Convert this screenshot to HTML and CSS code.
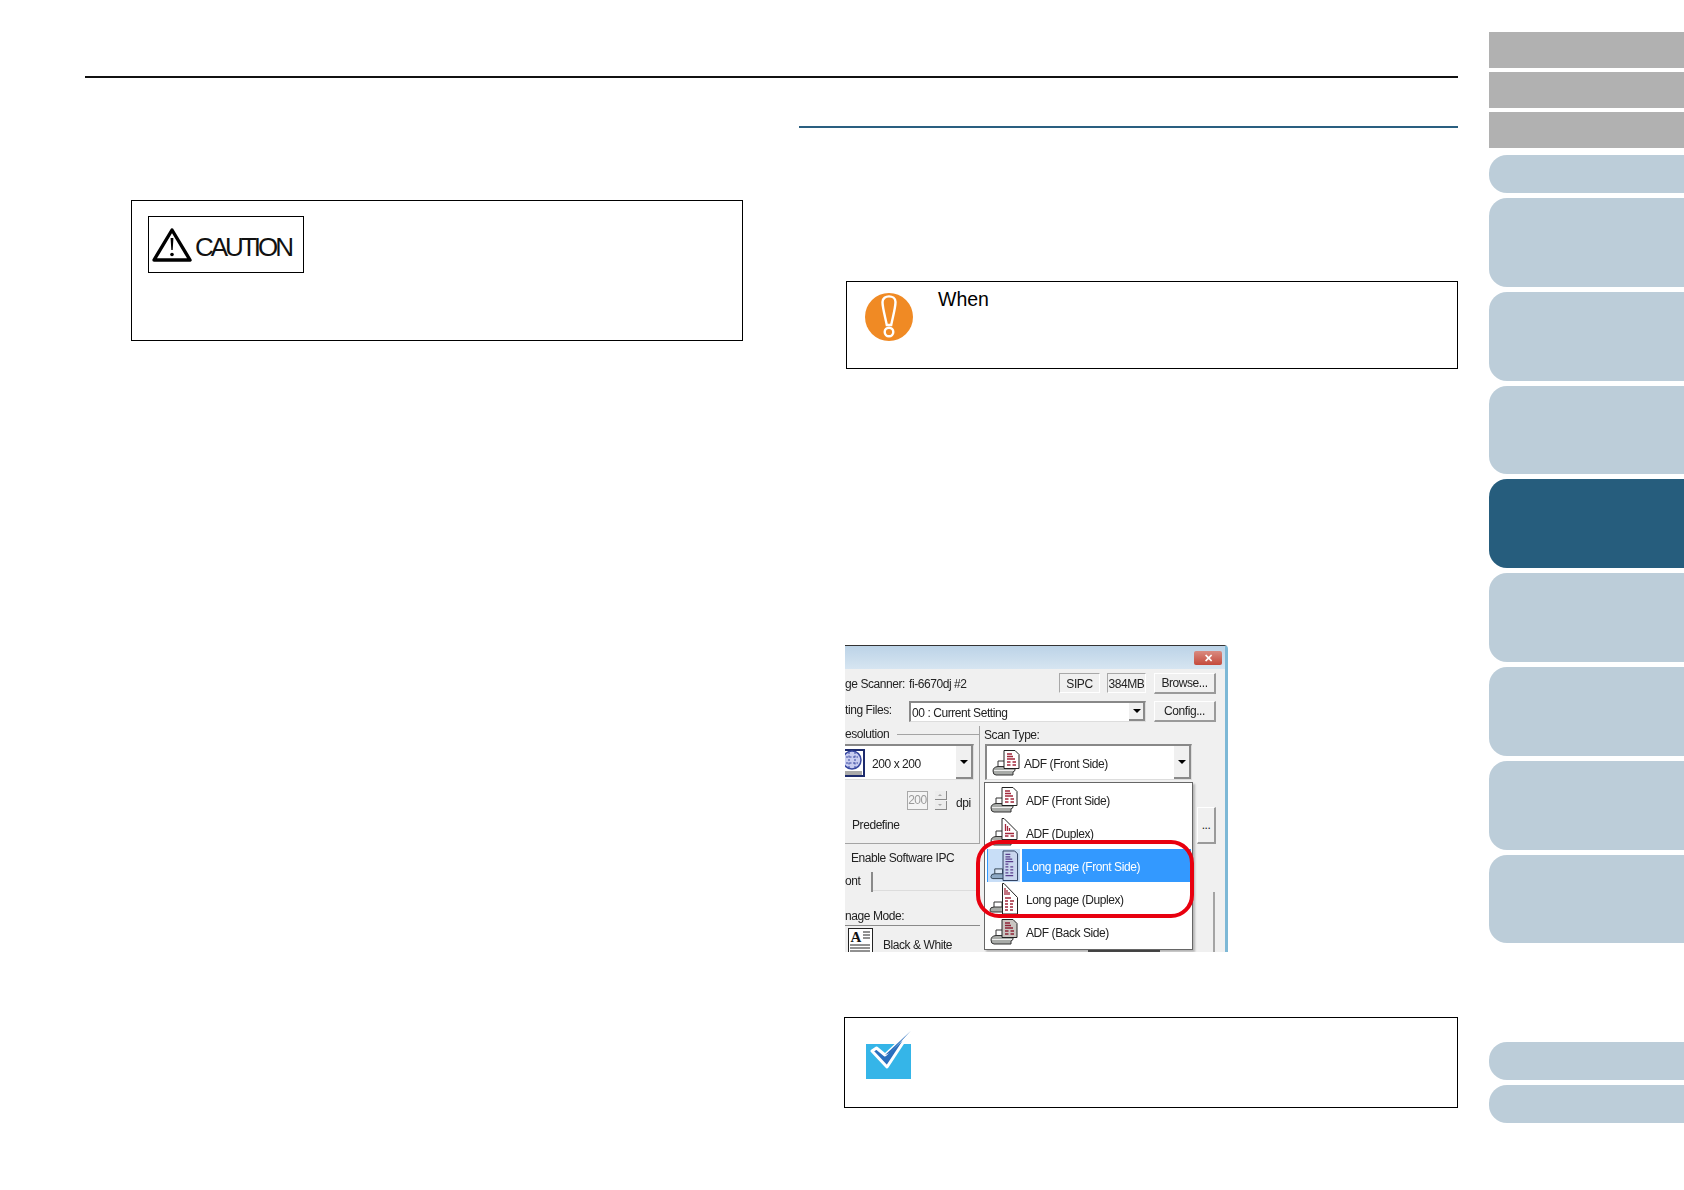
FILE: index.html
```html
<!DOCTYPE html>
<html lang="en">
<head>
<meta charset="utf-8">
<title>Scan Type</title>
<link rel="stylesheet" href="styles.css">
</head>
<body>
<svg class="sprites" aria-hidden="true">
  <symbol id="base" viewBox="0 0 33 33">
    <path d="M9 21v-6h8v6z" fill="#fff" stroke="#333"/>
    <path d="M4 25q0-4 5-4.500h17v4l-2 1.500v3H7q-3 0-3-4z" fill="#a9aca9" stroke="#333"/>
    <path d="M5 24.500h20" stroke="#eee"/>
  </symbol>
  <symbol id="adf" viewBox="0 0 33 33">
    <use href="#base"/>
    <path d="M15 4.500h11l4 4v14H15z" fill="#fff" stroke="#222"/>
    <path d="M18 8h5M18 10.500h6M18 13h8M18 16h3.500M23.500 16h3.500M18 19h3.500M23.500 19h3.500" stroke="#a3283c" stroke-width="1.300"/>
  </symbol>
  <symbol id="adf-back" viewBox="0 0 33 33">
    <use href="#base"/>
    <path d="M15 4.500h11l4 4v14H15z" fill="#c9c5c1" stroke="#222"/>
    <path d="M18 8h5M18 10.500h6M18 13h8M18 16h3.500M23.500 16h3.500M18 19h3.500M23.500 19h3.500" stroke="#8e2336" stroke-width="1.300"/>
  </symbol>
  <symbol id="adf-duplex" viewBox="0 0 33 33">
    <use href="#base"/>
    <path d="M17 2.500l13 13v8H15v-21z" fill="#fff" stroke="#222"/>
    <path d="M18.500 8v7M20.500 10v5M22.500 12v3" stroke="#a3283c" stroke-width="1.300"/>
    <path d="M18 17.500h9M18 20h3.500M23.500 20h3.500" stroke="#a3283c" stroke-width="1.300"/>
  </symbol>
  <symbol id="long" viewBox="0 0 33 33">
    <path d="M7 26v-6h8v6z" fill="#dbe8f6" stroke="#345"/>
    <path d="M3 28q0-3 4-3h11v5H5q-2 0-2-2z" fill="#8ea9c4" stroke="#345"/>
    <path d="M15.500 1.500h12l3 3v27.500h-15z" fill="#c9d6ee" stroke="#2a3a5c"/>
    <path d="M18 5h5M18 7.500h5M18 10h7M18 12.500h8M18 15h3M18 18h3M23 18h3M18 21h3M23 21h3M18 24h3M23 24h3M18 27h8" stroke="#5a3f8c" stroke-width="1.300"/>
  </symbol>
  <symbol id="long-duplex" viewBox="0 0 33 33">
    <path d="M7 26v-6h8v6z" fill="#fff" stroke="#333"/>
    <path d="M3 28q0-3 4-3h11v5H5q-2 0-2-2z" fill="#a9aca9" stroke="#333"/>
    <path d="M17 1.500l13.500 14v16.500h-15v-30.500z" fill="#fff" stroke="#222"/>
    <path d="M18 6v7M20 8v5M22 10v3" stroke="#a3283c" stroke-width="1.300"/>
    <path d="M18 16h6M18 19h3M23 19h4M18 22h3M23 22h3M18 25h3M23 25h3M18 28h3M23 28h3" stroke="#a3283c" stroke-width="1.300"/>
  </symbol>
</svg>

<div class="page">
  <main class="main">
    <div class="top-rule"></div>
    <div class="columns">
      <section class="col-left">
        <div class="notice caution-box">
          <div class="caution-label">
            <svg class="caution-tri" viewBox="0 0 40 35" aria-hidden="true">
              <path d="M20 3 L38 33 H2 Z" fill="#fff" stroke="#000" stroke-width="3.400" stroke-linejoin="round"/>
              <path d="M18.600 11h2.800l-.7 12h-1.400z" fill="#000"/>
              <circle cx="20" cy="27.500" r="1.800" fill="#000"/>
            </svg>
            <span class="caution-text">CAUTION</span>
          </div>
        </div>
      </section>

      <section class="col-right">
        <div class="section-rule"></div>

        <div class="notice important-box">
          <svg class="important-icon" viewBox="0 0 48 48" aria-hidden="true">
            <circle cx="24" cy="24" r="24" fill="#f08a24"/>
            <path d="M17.500 9c0-7.500 13-7.500 13 0 0 6-3 16-4.300 23h-4.400C20.500 25 17.500 15 17.500 9z" fill="#f08a24" stroke="#fff" stroke-width="2.400"/>
            <circle cx="24" cy="39" r="4.300" fill="#f08a24" stroke="#fff" stroke-width="2.400"/>
          </svg>
          <span class="when">When</span>
        </div>

        <div class="shot">
          <div class="shot-title"><span class="close-btn"><span class="close-x">✕</span></span></div>

          <div class="shot-row row-scanner">
            <span class="row-label">ge Scanner:</span>
            <span class="row-value">fi-6670dj #2</span>
            <span class="status status-sipc">SIPC</span>
            <span class="status status-mem">384MB</span>
            <span class="btn">Browse...</span>
          </div>

          <div class="shot-row row-files">
            <span class="row-label row-label-up">ting Files:</span>
            <span class="combo combo-files"><span class="files-value">00 : Current Setting</span><span class="combo-arrow small"></span></span>
            <span class="btn">Config...</span>
          </div>

          <div class="shot-lower">
            <div class="shot-left">
              <div class="group">
                <div class="legend"><span>esolution</span><i class="legend-line"></i></div>
                <div class="combo combo-res">
                  <svg class="res-icon" viewBox="0 0 20 28" aria-hidden="true">
                    <path d="M0 1h19v26H0" fill="#fff" stroke="#1c2a6c" stroke-width="2"/>
                    <circle cx="7" cy="11" r="9" fill="#c8cdf0" stroke="#3848a0" stroke-width="1.500"/>
                    <path d="M1 8h12M1 14h12M4 3v16M10 3v16" stroke="#3848a0" stroke-dasharray="2 1.500"/>
                    <path d="M0 23h17M0 25h17" stroke="#555"/>
                  </svg>
                  <span class="res-value">200 x 200</span>
                  <span class="combo-arrow"></span>
                </div>
                <div class="dpi-row">
                  <span class="spin-input">200</span>
                  <span class="spin"><i class="spin-part spin-up"></i><i class="spin-part spin-down"></i></span>
                  <span class="dpi">dpi</span>
                </div>
                <div class="predefine">Predefine</div>
              </div>
              <div class="enable-row">Enable Software IPC</div>
              <div class="tabs"><span class="tab">ont</span><i class="tab-line"></i></div>
              <div class="mode-label">nage Mode:</div>
              <div class="mode-row">
                <svg class="mode-icon" viewBox="0 0 25 25" aria-hidden="true">
                  <rect x=".5" y=".5" width="24" height="24" fill="#fff" stroke="#222"/>
                  <text x="2.500" y="14" class="mode-a">A</text>
                  <path d="M15 4h7M15 7h7M15 10h7M2 17h20M2 20h20M2 23h20" stroke="#222"/>
                </svg>
                <span class="mode-text">Black &amp; White</span>
              </div>
            </div>

            <div class="shot-right">
              <div class="scan-label">Scan Type:</div>
              <div class="combo combo-scan">
                <svg class="item-icon" aria-hidden="true"><use href="#adf"/></svg>
                <span class="scan-value">ADF (Front Side)</span>
                <span class="combo-arrow"></span>
              </div>
              <span class="btn btn-dots">...</span>
              <i class="panel-edge"></i>
              <i class="panel-dark"></i>

              <ul class="menu">
                <li class="menu-item"><svg class="item-icon" aria-hidden="true"><use href="#adf"/></svg><span class="item-text">ADF (Front Side)</span></li>
                <li class="menu-item"><svg class="item-icon" aria-hidden="true"><use href="#adf-duplex"/></svg><span class="item-text">ADF (Duplex)</span></li>
                <li class="menu-item selected"><svg class="item-icon" aria-hidden="true"><use href="#long"/></svg><span class="item-text">Long page (Front Side)</span></li>
                <li class="menu-item"><svg class="item-icon" aria-hidden="true"><use href="#long-duplex"/></svg><span class="item-text">Long page (Duplex)</span></li>
                <li class="menu-item"><svg class="item-icon" aria-hidden="true"><use href="#adf-back"/></svg><span class="item-text">ADF (Back Side)</span></li>
              </ul>
            </div>
          </div>
          <div class="ring"></div>
        </div>

        <div class="notice hint-box">
          <svg class="hint-icon" viewBox="0 0 45 50" aria-hidden="true">
            <rect x="0" y="15" width="45" height="35" fill="#35b5e8"/>
            <path d="M6 22 L10.500 19 L19 26 L44.700 2 L21 38 Z" fill="#2a6fbe" stroke="#fff" stroke-width="3" stroke-linejoin="round"/>
            <path d="M44.700 2 L24 24 L19 26 Z" fill="#2a6fbe"/>
          </svg>
        </div>
      </section>
    </div>
  </main>

  <nav class="side" aria-label="Chapters">
    <div class="tab-grey"></div>
    <div class="tab-grey"></div>
    <div class="tab-grey"></div>
    <div class="tab-pill tab-first"></div>
    <div class="tab-big"></div>
    <div class="tab-big"></div>
    <div class="tab-big"></div>
    <div class="tab-big tab-active"></div>
    <div class="tab-big"></div>
    <div class="tab-big"></div>
    <div class="tab-big"></div>
    <div class="tab-big"></div>
    <div class="tab-pill tab-bottom"></div>
    <div class="tab-pill"></div>
  </nav>
</div>
</body>
</html>
```

FILE: styles.css
```css
* { box-sizing: border-box; }

html, body {
  margin: 0;
  padding: 0;
  background: #fff;
}

body {
  height: 1190px;
  overflow: hidden;
  font-family: "Liberation Sans", Arial, sans-serif;
  color: #000;
}

.sprites {
  position: absolute;
  width: 0;
  height: 0;
}

.page {
  display: flex;
  align-items: flex-start;
}

/* ---------- main ---------- */
.main {
  width: 1458px;
  padding: 76px 0 0 85px;
  flex: none;
}

.top-rule {
  height: 2px;
  background: #111;
}

.columns {
  display: flex;
}

.col-left {
  width: 714px;
  flex: none;
  padding: 122px 0 0 46px;
}

.col-right {
  flex: 1;
  padding-top: 48px;
}

.section-rule {
  height: 2px;
  background: #2a5f80;
}

.notice {
  border: 1px solid #000;
  width: 612px;
  background: #fff;
}

/* ---------- caution ---------- */
.caution-box {
  height: 141px;
  padding: 15px 0 0 16px;
}

.caution-label {
  width: 156px;
  height: 57px;
  border: 1.500px solid #000;
  display: flex;
  align-items: center;
  padding: 0 0 1px 3px;
}

.caution-tri {
  width: 40px;
  height: 35px;
  flex: none;
}

.caution-text {
  font-size: 26px;
  letter-spacing: -3px;
  margin: 6px 0 0 3px;
  color: #111;
}

/* ---------- important ---------- */
.important-box {
  height: 88px;
  margin: 153px 0 0 47px;
  display: flex;
  align-items: flex-start;
  padding: 11px 0 0 18px;
}

.important-icon {
  width: 48px;
  height: 48px;
  flex: none;
}

.when {
  font-size: 19.500px;
  line-height: 22px;
  margin: -5px 0 0 25px;
}

/* ---------- hint ---------- */
.hint-box {
  width: 614px;
  height: 91px;
  margin: 65px 0 0 45px;
  padding: 11px 0 0 21px;
}

.hint-icon {
  display: block;
  width: 45px;
  height: 50px;
}

/* ---------- dialog picture ---------- */
.shot {
  position: relative;
  width: 383px;
  height: 307px;
  margin: 276px 0 0 46px;
  overflow: hidden;
  background: #f0f0f0;
  border-top: 1px solid #333;
  border-right: 3px solid #7db8d6;
  border-top-right-radius: 4px;
  font-size: 12px;
  letter-spacing: -.43px;
  color: #222;
  filter: blur(.35px);
}

.shot-title {
  height: 23px;
  background: linear-gradient(#bcd3e7, #d6e5f1);
  display: flex;
  justify-content: flex-end;
  padding: 5px 3px 0 0;
}

.close-btn {
  width: 28px;
  height: 14px;
  border-radius: 2px;
  background: linear-gradient(#d98b80, #c44a3c);
  display: flex;
  align-items: center;
  justify-content: center;
}

.close-x {
  color: #fff;
  font-size: 11px;
  font-weight: bold;
  line-height: 14px;
}

.shot-row {
  display: flex;
  align-items: center;
}

.row-scanner {
  height: 27px;
  padding-top: 1px;
}

.row-files {
  height: 21px;
  margin-top: 5px;
}

.row-label {
  width: 64px;
  flex: none;
  margin-top: 2px;
}

.row-label-up {
  margin-top: -4px;
}

.row-value {
  width: 150px;
  flex: none;
  margin-top: 2px;
}

.status {
  height: 20px;
  line-height: 20px;
  text-align: center;
  flex: none;
  border-left: 1px solid #a8a8a8;
  border-top: 1px solid #a8a8a8;
  border-right: 1px solid #fff;
  border-bottom: 1px solid #fff;
}

.status-sipc {
  width: 41px;
}

.status-mem {
  width: 39px;
  margin-left: 7px;
}

.btn {
  width: 62px;
  height: 21px;
  margin-left: 8px;
  flex: none;
  display: flex;
  align-items: center;
  justify-content: center;
  background: #f0f0f0;
  border-top: 1px solid #fff;
  border-left: 1px solid #fff;
  border-right: 2px solid #9a9a9a;
  border-bottom: 2px solid #9a9a9a;
}

.combo {
  display: flex;
  align-items: center;
  background: #fff;
  border-top: 2px solid #888;
  border-left: 2px solid #888;
  border-right: 1px solid #ddd;
  border-bottom: 1px solid #ddd;
  flex: none;
}

.combo-files {
  width: 237px;
  height: 21px;
  padding-left: 1px;
}

.files-value {
  margin-top: 1px;
}

.combo-arrow {
  margin-left: auto;
  align-self: stretch;
  width: 17px;
  flex: none;
  position: relative;
  background: #f0f0f0;
  border-right: 2px solid #8a8a8a;
  border-bottom: 2px solid #8a8a8a;
}

.combo-arrow::after {
  content: "";
  position: absolute;
  left: 4px;
  top: 50%;
  margin-top: -2px;
  border-left: 4px solid transparent;
  border-right: 4px solid transparent;
  border-top: 4px solid #000;
}

.combo-arrow.small {
  width: 16px;
}

.shot-lower {
  display: flex;
  margin-top: 4px;
}

.shot-left {
  width: 135px;
  flex: none;
}

.group {
  height: 118px;
  border-right: 1px solid #a4a4a4;
  border-bottom: 1px solid #a4a4a4;
}

.legend {
  display: flex;
  align-items: center;
  height: 16px;
}

.legend-line {
  flex: 1;
  height: 1px;
  margin-left: 8px;
  background: #a4a4a4;
}

.combo-res {
  width: 129px;
  height: 36px;
  margin-top: 2px;
  border-left: 0;
}

.res-icon {
  width: 20px;
  height: 28px;
  flex: none;
}

.res-value {
  margin: 2px 0 0 7px;
}

.dpi-row {
  display: flex;
  align-items: center;
  height: 19px;
  margin-top: 11px;
  padding-left: 62px;
}

.spin-input {
  width: 21px;
  height: 19px;
  line-height: 17px;
  text-align: center;
  color: #9a9a9a;
  background: #f4f4f4;
  border: 1px solid #a8a8a8;
}

.spin {
  width: 12px;
  height: 19px;
  margin-left: 7px;
  display: flex;
  flex-direction: column;
  gap: 1px;
}

.spin-part {
  flex: 1;
  position: relative;
  background: #ececec;
  border-right: 1px solid #8a8a8a;
  border-bottom: 1px solid #8a8a8a;
}

.spin-part::after {
  content: "";
  position: absolute;
  left: 3px;
  top: 3px;
  border-left: 2px solid transparent;
  border-right: 2px solid transparent;
}

.spin-up::after {
  border-bottom: 2px solid #aaa;
}

.spin-down::after {
  border-top: 2px solid #aaa;
}

.dpi {
  margin: 4px 0 0 9px;
}

.predefine {
  height: 18px;
  line-height: 18px;
  margin-top: 6px;
  padding-left: 7px;
}

.enable-row {
  height: 18px;
  line-height: 18px;
  margin-top: 5px;
  padding-left: 6px;
}

.tabs {
  display: flex;
  height: 20px;
  margin-top: 5px;
}

.tab {
  width: 28px;
  line-height: 18px;
  border-right: 2px solid #8a8a8a;
  flex: none;
}

.tab-line {
  flex: 1;
  height: 1px;
  margin-top: 18px;
  background: #dcdcdc;
}

.mode-label {
  height: 19px;
  line-height: 18px;
  margin-top: 15px;
  border-bottom: 1px solid #8a8a8a;
}

.mode-row {
  display: flex;
  align-items: center;
  gap: 10px;
  height: 27px;
  padding: 1px 0 0 3px;
}

.mode-text {
  margin-top: 9px;
}

.mode-icon {
  width: 25px;
  height: 25px;
  flex: none;
}

.mode-a {
  font-family: "Liberation Serif", serif;
  font-size: 15px;
  font-weight: bold;
  fill: #111;
}

.shot-right {
  position: relative;
  flex: 1;
  padding-left: 4px;
}

.scan-label {
  height: 18px;
  line-height: 18px;
}

.combo-scan {
  width: 207px;
  height: 36px;
  margin-left: 1px;
  padding-left: 2px;
}

.item-icon {
  width: 33px;
  height: 33px;
  flex: none;
}

.scan-value {
  margin: 2px 0 0 2px;
}

.btn-dots {
  position: absolute;
  left: 217px;
  top: 81px;
  width: 19px;
  height: 37px;
  margin: 0;
  align-items: flex-end;
  padding-bottom: 10px;
}

.panel-edge {
  position: absolute;
  left: 233px;
  top: 166px;
  width: 2px;
  height: 60px;
  background: #a4a4a4;
}

.panel-dark {
  position: absolute;
  left: 108px;
  top: 222px;
  width: 72px;
  height: 5px;
  background: #555;
}

.menu {
  position: absolute;
  left: 4px;
  top: 56px;
  width: 209px;
  height: 168px;
  margin: 0;
  padding: 0;
  list-style: none;
  background: #fff;
  border: 1px solid #666;
  box-shadow: 2px 2px 2px rgba(0, 0, 0, .25);
}

.menu-item {
  display: flex;
  height: 33px;
  padding: 0 1px 0 2px;
}

.item-text {
  flex: 1;
  margin-left: 2px;
  padding: 3px 0 0 4px;
  height: 33px;
  overflow: hidden;
  line-height: 30px;
}

.selected .item-text {
  background: #3399ff;
  color: #fff;
}

.selected .item-icon {
  background: #c8def7;
  border-left: 1px solid #3399ff;
}

.ring {
  position: absolute;
  left: 131px;
  top: 194px;
  width: 218px;
  height: 78px;
  border: 4px solid #e8000f;
  border-radius: 23px;
}

/* ---------- side tabs ---------- */
.side {
  margin-left: 31px;
  padding-top: 32px;
  width: 195px;
  flex: none;
  display: flex;
  flex-direction: column;
}

.tab-grey {
  height: 36px;
  margin-bottom: 4px;
  background: #b1b1b1;
}

.tab-pill,
.tab-big {
  background: #bccdd9;
  border-radius: 18px 0 0 18px;
}

.tab-pill {
  height: 38px;
  margin-bottom: 5px;
}

.tab-first {
  margin-top: 3px;
}

.tab-big {
  height: 88.800px;
  margin-bottom: 5px;
}

.tab-active {
  background: #265d7d;
}

.tab-bottom {
  margin-top: 93.600px;
}
```
